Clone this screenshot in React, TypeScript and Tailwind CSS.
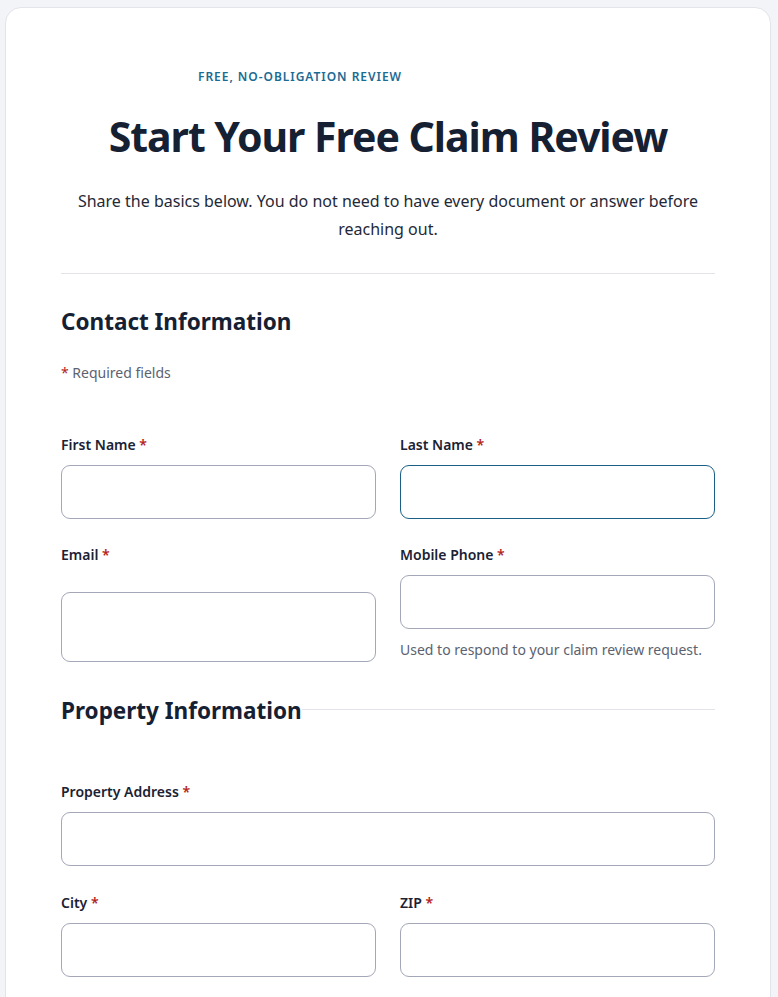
import React from "react";

const font = { fontFamily: '"Noto Sans", "Open Sans", sans-serif' };

function Req() {
  return <span className="text-[#b42318]"> *</span>;
}

function Field({
  label,
  focused,
  help,
}: {
  label: string;
  focused?: boolean;
  help?: string;
}) {
  return (
    <div className="flex flex-col">
      <label className="text-[14px] leading-[20px] font-semibold text-[#1a2233]">
        {label}
        <Req />
      </label>
      <input
        className={
          "mt-[10px] h-[54px] w-full rounded-[9px] border bg-white px-3 outline-none " +
          (focused ? "border-[#1b5f86]" : "border-[#a3a7b8]")
        }
      />
      {help && (
        <p className="mt-[11px] text-[14px] leading-[20px] text-[#5b6270]">{help}</p>
      )}
    </div>
  );
}

export default function App() {
  return (
    <div className="min-h-screen bg-[#f3f4f8] pl-[5px] pr-[7px] pt-[7px]" style={font}>
      <div className="rounded-t-[16px] border border-[#e1e4eb] bg-white px-[55px] pt-[60px] pb-10">
        {/* Header */}
        <div className="mx-auto w-[380px] text-[12px] font-semibold uppercase tracking-[0.08em] text-[#1b6b93]">
          Free, No-Obligation Review
        </div>
        <h1 className="mt-[24px] text-center text-[41px] leading-[52px] font-bold tracking-tight text-[#162033]">
          Start Your Free Claim Review
        </h1>
        <p className="mx-auto mt-[25px] max-w-[630px] text-center text-[16px] leading-[28px] text-[#1f2937]">
          Share the basics below. You do not need to have every document or answer before
          reaching out.
        </p>
        <div className="mt-[30px] h-px bg-[#e2e4e9]" />

        {/* Contact */}
        <h2 className="mt-[33px] text-[22.5px] leading-[30px] font-bold text-[#162033]">
          Contact Information
        </h2>
        <p className="mt-[26px] text-[14px] leading-[20px] text-[#5b6270]">
          <span className="text-[#b42318]">*</span> Required fields
        </p>

        <div className="mt-[52px] grid grid-cols-2 gap-x-6 gap-y-[26px]">
          <Field label="First Name" />
          <Field label="Last Name" focused />
          <div className="flex flex-col">
            <label className="text-[14px] leading-[20px] font-semibold text-[#1a2233]">
              Email
              <Req />
            </label>
            <input className="mt-[27px] h-[70px] w-full rounded-[9px] border border-[#a3a7b8] bg-white px-3 outline-none" />
          </div>
          <Field label="Mobile Phone" help="Used to respond to your claim review request." />
        </div>

        {/* Property */}
        <div className="mt-[33px] flex items-center">
          <h2 className="text-[22.5px] leading-[32px] font-bold text-[#162033]">
            Property Information
          </h2>
          <div className="mb-[4px] h-px flex-1 bg-[#e2e4e9]" />
        </div>

        <div className="mt-[55px] grid grid-cols-2 gap-x-6 gap-y-[27px]">
          <div className="col-span-2">
            <Field label="Property Address" />
          </div>
          <Field label="City" />
          <Field label="ZIP" />
        </div>
      </div>
    </div>
  );
}
